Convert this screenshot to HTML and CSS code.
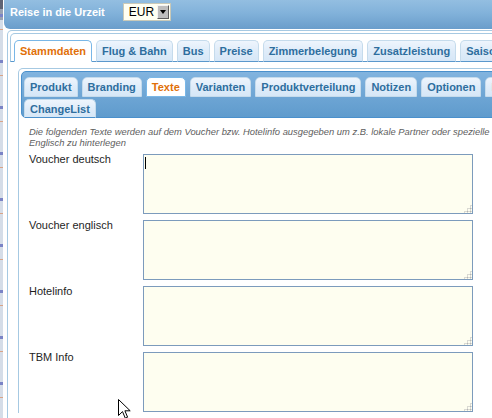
FILE: index.html
```html
<!DOCTYPE html>
<html lang="de">
<head>
<meta charset="utf-8">
<title>Reise in die Urzeit</title>
<link rel="stylesheet" href="styles.css">
</head>
<body>
<div class="strip"></div>
<div class="main">
  <header class="topbar">
    <span class="title">Reise in die Urzeit</span>
    <div class="currency">
      <span class="currency-value">EUR</span>
      <span class="drop"><svg width="6" height="4" viewBox="0 0 6 4"><path d="M0 0H6L3 4Z" fill="#000"/></svg></span>
    </div>
  </header>
  <div class="tabs outer">
    <ul class="tabnav outer-nav">
      <li class="tab active">Stammdaten</li>
      <li class="tab">Flug &amp; Bahn</li>
      <li class="tab">Bus</li>
      <li class="tab">Preise</li>
      <li class="tab">Zimmerbelegung</li>
      <li class="tab">Zusatzleistung</li>
      <li class="tab">Saisonzeiten</li>
    </ul>
    <div class="outer-panel">
      <div class="tabs inner">
        <div class="tabnav inner-nav">
          <ul class="tabrow">
            <li class="tab">Produkt</li>
            <li class="tab">Branding</li>
            <li class="tab active">Texte</li>
            <li class="tab">Varianten</li>
            <li class="tab">Produktverteilung</li>
            <li class="tab">Notizen</li>
            <li class="tab">Optionen</li>
            <li class="tab">Bilder</li>
          </ul>
          <ul class="tabrow last">
            <li class="tab">ChangeList</li>
          </ul>
        </div>
        <div class="inner-panel">
          <p class="desc">Die folgenden Texte werden auf dem Voucher bzw. Hotelinfo ausgegeben um z.B. lokale Partner oder spezielle<br>Englisch zu hinterlegen</p>
          <div class="form">
            <label class="label">Voucher deutsch</label>
            <div class="field focused"><textarea></textarea></div>
            <label class="label">Voucher englisch</label>
            <div class="field"><textarea></textarea></div>
            <label class="label">Hotelinfo</label>
            <div class="field"><textarea></textarea></div>
            <label class="label">TBM Info</label>
            <div class="field"><textarea></textarea></div>
          </div>
        </div>
      </div>
    </div>
  </div>
</div>
<svg class="pointer" width="13" height="20" viewBox="0 0 13 20"><path d="M0.5 0.5V16.5L4.5 12.6L7.3 19.2L9.6 18.2L6.9 11.8H12.2Z" fill="#fff" stroke="#000" stroke-width="1" stroke-linejoin="miter"/></svg>
</body>
</html>
```

FILE: styles.css
```css
html, body {
  margin: 0;
  padding: 0;
}

body {
  width: 492px;
  height: 418px;
  overflow: hidden;
  display: flex;
  background: #fff;
  font-family: "Liberation Sans", Arial, sans-serif;
  position: relative;
}

.strip {
  flex: none;
  width: 4px;
  background:
    repeating-linear-gradient(to bottom, transparent 0 14px, #7b84c6 14px 17px, transparent 17px 29px, #d9a487 29px 30px, transparent 30px 46px),
    linear-gradient(to bottom, #5f6474 0 9px, #9aa3b3 9px 20px, #d5dde8 20px);
  border-right: 1px solid #fff;
  box-sizing: border-box;
}

.main {
  flex: none;
  width: 640px;
}

.topbar {
  height: 29px;
  box-sizing: border-box;
  padding: 3px 0 0 6px;
  display: flex;
  align-items: flex-start;
  background: linear-gradient(to bottom, #93bee1 0%, #82b2da 45%, #6a9dcb 100%);
  border-bottom-left-radius: 6px;
}

.title {
  color: #fff;
  font-weight: bold;
  font-size: 11px;
  line-height: 18px;
  margin-right: 18px;
}

.currency {
  display: flex;
  align-items: center;
  width: 48px;
  height: 18px;
  box-sizing: border-box;
  border: 1px solid #c9c9b8;
  background: #fffff2;
  padding-left: 5px;
}

.currency-value {
  font-size: 12px;
  color: #000;
}

.drop {
  margin-left: auto;
  margin-right: 1px;
  width: 12px;
  height: 14px;
  box-sizing: border-box;
  background: #bdbdbd;
  border: 1px solid;
  border-color: #f4f4f4 #5c5c5c #5c5c5c #f4f4f4;
  display: flex;
  align-items: center;
  justify-content: center;
}

/* Tabs */

.tabs {
  border: 1px solid #a6c9e2;
  border-bottom: none;
  border-radius: 5px 5px 0 0;
  padding: 2px;
}

.outer {
  margin: 1px 0 0 3px;
  height: 400px;
}

.tabnav {
  list-style: none;
  margin: 0;
}

.tab {
  flex: none;
  box-sizing: border-box;
  padding: 0 5px;
  border: 1px solid #c5dbec;
  border-radius: 5px 5px 0 0;
  background: linear-gradient(to bottom, #eef5fd 0%, #dfecf9 50%, #d6e7f7 100%);
  color: #2e6e9e;
  font-weight: bold;
  font-size: 11px;
  white-space: nowrap;
}

.tab.active {
  background: #fff;
  border-color: #79b7e7;
  color: #e17009;
}

.outer-nav {
  display: flex;
  gap: 4px;
  padding: 6px 3px 0;
  border: 1px solid #a6c9e2;
  border-bottom-color: #5b98cc;
  border-radius: 5px 5px 0 0;
  background: #fff;
}

.outer-nav .tab {
  height: 22px;
  line-height: 20px;
  margin-bottom: -1px;
  border-bottom-color: #5b98cc;
}

.outer-nav .tab.active {
  border-bottom-color: #fff;
}

.outer-panel {
  padding: 6px 0 0 8px;
}

.inner {
  height: 340px;
}

.inner-nav {
  padding: 5px 2px 0;
  border: 1px solid #4a90cc;
  border-radius: 5px;
  background: linear-gradient(to bottom, #82b4df 0%, #6fa6d5 50%, #5f9bcd 100%);
  display: flex;
  flex-direction: column;
  gap: 2px;
}

.tabrow {
  list-style: none;
  margin: 0;
  padding: 0;
  display: flex;
  gap: 4px;
}

.inner-nav .tab {
  height: 20px;
  line-height: 18px;
}

.tabrow.last .tab {
  height: 19px;
  margin-bottom: -1px;
  border-bottom-color: #4a90cc;
}

.inner-panel {
  padding: 8px 0 0 8px;
}

.desc {
  margin: 0 0 6px;
  font-style: italic;
  font-size: 9.4px;
  line-height: 11px;
  color: #5e5e5e;
  white-space: nowrap;
}

.form {
  display: grid;
  grid-template-columns: 114px 330px;
  row-gap: 6px;
  align-items: start;
}

.label {
  font-size: 11px;
  line-height: 13px;
  color: #1e1e1e;
  margin-top: -1px;
}

.field {
  position: relative;
}

.field textarea {
  display: block;
  box-sizing: border-box;
  width: 330px;
  height: 60px;
  margin: 0;
  padding: 2px;
  border: 1px solid #7c9bbc;
  border-radius: 0;
  background: #fefef0;
  font-family: "Liberation Sans", Arial, sans-serif;
  font-size: 11px;
  resize: none;
}

.field::before {
  content: "";
  position: absolute;
  right: 1px;
  bottom: 1px;
  width: 9px;
  height: 9px;
  background: radial-gradient(circle, #b5b5b5 0.9px, transparent 1.1px) 0 0 / 3px 3px;
  clip-path: polygon(100% 0, 100% 100%, 0 100%);
}

.field.focused::after {
  content: "";
  position: absolute;
  left: 2px;
  top: 3px;
  width: 1px;
  height: 12px;
  background: #000;
}

.pointer {
  position: absolute;
  left: 118px;
  top: 399px;
}
```
